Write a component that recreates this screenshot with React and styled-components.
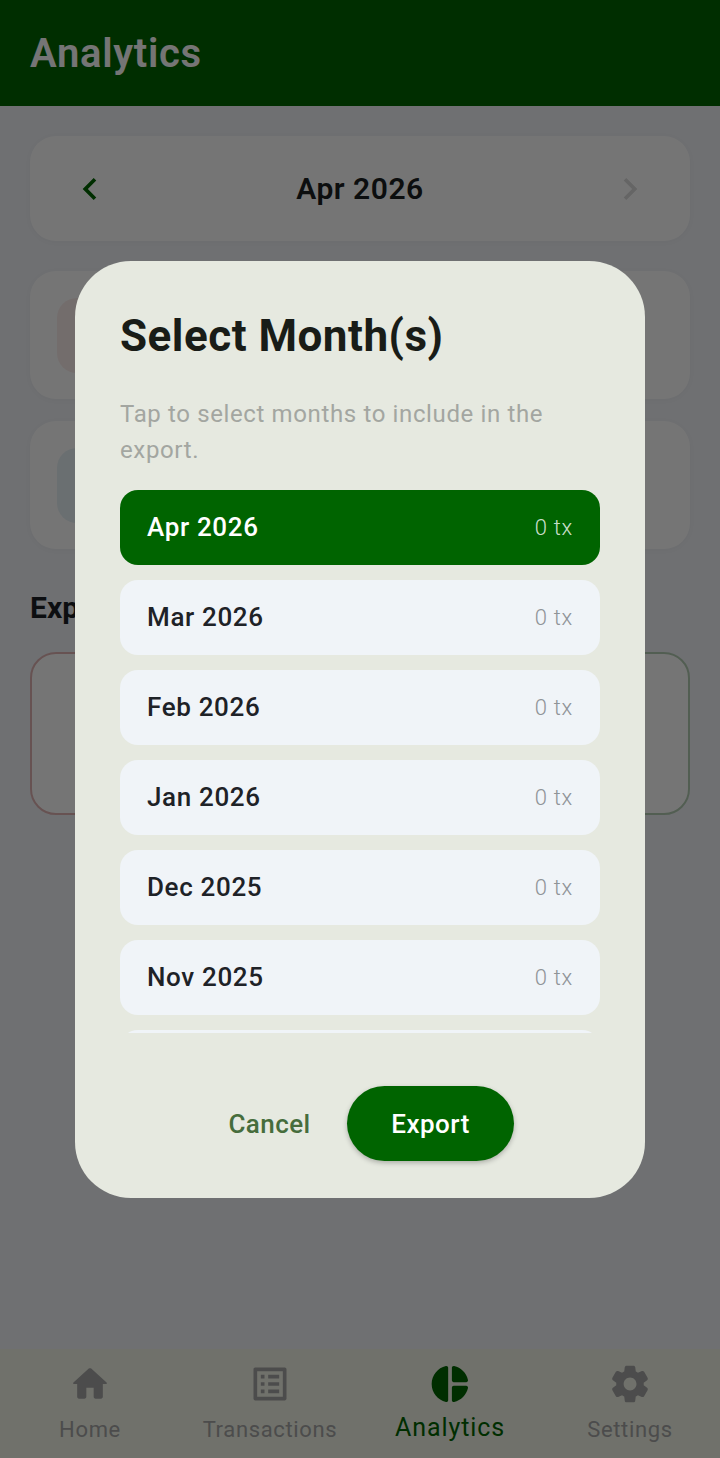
import React from 'react';
import styled, { createGlobalStyle } from 'styled-components';

const GlobalStyle = createGlobalStyle`
  html, body {
    margin: 0;
    padding: 0;
    height: 100%;
    overflow: hidden;
    font-family: Roboto, "Noto Sans", sans-serif;
  }
`;

const Page = styled.div`
  position: relative;
  display: flex;
  flex-direction: column;
  width: 720px;
  height: 1458px;
  overflow: hidden;
  background: #f1f3f8;
`;

const Header = styled.header`
  display: flex;
  align-items: center;
  height: 106px;
  padding: 0 30px;
  box-sizing: border-box;
  background: #006400;
`;

const HeaderTitle = styled.h1`
  margin: 0;
  font-size: 40px;
  font-weight: 600;
  letter-spacing: 0.7px;
  color: #fff;
`;

const Content = styled.main`
  flex: 1;
  display: flex;
  flex-direction: column;
  padding: 30px 30px 0;
`;

const Card = styled.section`
  background: #fff;
  border-radius: 26px;
  box-shadow: 0 1px 6px rgba(0, 0, 0, 0.03);
`;

const MonthCard = styled(Card)`
  display: flex;
  align-items: center;
  justify-content: space-between;
  height: 105px;
  padding: 0 38px;
  margin-bottom: 30px;
`;

const MonthLabel = styled.div`
  font-size: 30px;
  font-weight: 600;
  letter-spacing: 0.5px;
  color: #1c1f22;
`;

const StatCard = styled(Card)`
  display: flex;
  align-items: center;
  height: 128px;
  padding: 0 27px;
  box-sizing: border-box;
  margin-bottom: 22px;
`;

const StatBadge = styled.div`
  width: 75px;
  height: 75px;
  border-radius: 20px;
  background: ${(p) => p.$tint};
`;

const SectionTitle = styled.h2`
  margin: 20px 0 0;
  height: 40px;
  line-height: 34px;
  font-size: 30px;
  font-weight: 700;
  color: #1c1f26;
`;

const ExportRow = styled.div`
  display: grid;
  grid-template-columns: 1fr 1fr;
  gap: 20px;
  margin-top: 21px;
`;

const ExportCard = styled.div`
  height: 163px;
  box-sizing: border-box;
  border-radius: 26px;
  border: 2px solid ${(p) => p.$edge};
  background: #fff;
`;

const BottomNav = styled.nav`
  display: grid;
  grid-template-columns: repeat(4, 1fr);
  height: 109px;
  background: #f3f6e9;
`;

const NavItem = styled.div`
  display: flex;
  flex-direction: column;
  align-items: center;
  padding-top: 13px;
  color: ${(p) => (p.$active ? '#006400' : '#a6a6a6')};
`;

const NavIcon = styled.svg`
  display: block;
  width: 44px;
  height: 44px;
  fill: currentColor;
`;

const NavLabel = styled.span`
  font-size: ${(p) => (p.$active ? '25px' : '22px')};
  line-height: 30px;
  letter-spacing: ${(p) => (p.$active ? '0.9px' : '0.65px')};
  margin-top: ${(p) => (p.$active ? '7px' : '9px')};
`;

const Scrim = styled.div`
  position: absolute;
  inset: 0;
  display: flex;
  justify-content: center;
  align-items: flex-start;
  padding-top: 261px;
  box-sizing: border-box;
  background: rgba(0, 0, 0, 0.54);
`;

const Dialog = styled.div`
  display: flex;
  flex-direction: column;
  width: 570px;
  height: 937px;
  box-sizing: border-box;
  padding: 49px 45px 37px;
  border-radius: 56px;
  background: #e6e9e0;
`;

const DialogTitle = styled.h2`
  margin: 0;
  font-size: 44px;
  line-height: 52px;
  font-weight: 700;
  letter-spacing: 0.5px;
  color: #191c17;
`;

const DialogText = styled.p`
  margin: 34px 0 22px;
  font-size: 24px;
  line-height: 36px;
  letter-spacing: 0.63px;
  color: #a3a6a1;
`;

const MonthList = styled.div`
  display: flex;
  flex-direction: column;
  gap: 15px;
  height: 543px;
  overflow: hidden;
`;

const MonthRow = styled.div`
  flex: none;
  display: flex;
  align-items: center;
  justify-content: space-between;
  height: 75px;
  padding: 0 27px 2px;
  box-sizing: border-box;
  border-radius: 18px;
  background: ${(p) => (p.$selected ? '#006400' : '#f0f4f8')};
`;

const RowMonth = styled.span`
  font-size: 26px;
  font-weight: 500;
  letter-spacing: 0.65px;
  color: ${(p) => (p.$selected ? '#fff' : '#1e2227')};
`;

const RowCount = styled.span`
  padding-top: 2px;
  font-size: 22px;
  font-weight: 300;
  letter-spacing: 0.7px;
  color: ${(p) => (p.$selected ? 'rgba(255,255,255,0.8)' : '#8f9397')};
`;

const Actions = styled.div`
  display: flex;
  justify-content: center;
  align-items: center;
  gap: 14px;
  margin-top: 53px;
`;

const CancelButton = styled.button`
  padding: 0 22px;
  border: 0;
  background: none;
  font-family: inherit;
  font-size: 26px;
  font-weight: 500;
  letter-spacing: 0.4px;
  color: #466d3c;
`;

const ExportButton = styled.button`
  width: 167px;
  height: 75px;
  padding: 0 0 0 1px;
  border: 0;
  border-radius: 38px;
  background: #006400;
  font-family: inherit;
  font-size: 26px;
  font-weight: 500;
  letter-spacing: 0.5px;
  color: #fff;
  box-shadow: 0 2px 5px rgba(0, 0, 0, 0.25);
`;

const Chevron = ({ dir, color }) => (
  <svg width="44" height="44" viewBox="0 0 24 24" fill={color}>
    {dir === 'left' ? (
      <path d="M15.41 7.41 14 6l-6 6 6 6 1.41-1.41L10.83 12z" />
    ) : (
      <path d="M8.59 16.59 10 18l6-6-6-6-1.41 1.41L13.17 12z" />
    )}
  </svg>
);

const navItems = [
  {
    label: 'Home',
    d: 'M10 19v-5h4v5c0 .55.45 1 1 1h3c.55 0 1-.45 1-1v-7h1.7c.46 0 .68-.57.33-.87L12.67 3.6c-.38-.34-.96-.34-1.34 0l-8.36 7.53c-.34.3-.13.87.33.87H5v7c0 .55.45 1 1 1h3c.55 0 1-.45 1-1z',
  },
  {
    label: 'Transactions',
    d: 'M19 5v14H5V5h14m1.1-2H3.9c-.5 0-.9.4-.9.9v16.2c0 .4.4.9.9.9h16.2c.4 0 .9-.5.9-.9V3.9c0-.5-.5-.9-.9-.9zM11 7h6v2h-6V7zm0 4h6v2h-6v-2zm0 4h6v2h-6zM7 7h2v2H7zm0 4h2v2H7zm0 4h2v2H7z',
  },
  {
    label: 'Analytics',
    active: true,
    d: 'M11 3.18v17.64c0 .64-.59 1.12-1.21.98C5.32 20.8 2 16.79 2 12s3.32-8.8 7.79-9.8c.62-.14 1.21.34 1.21.98zm2.03 0v6.81c0 .55.45 1 1 1h6.79c.64 0 1.12-.59.98-1.22-.85-3.76-3.8-6.72-7.55-7.57-.63-.14-1.22.34-1.22.98zm0 10.83v6.81c0 .64.59 1.12 1.22.98 3.76-.85 6.71-3.82 7.56-7.58.14-.62-.35-1.22-.98-1.22h-6.79c-.56.01-1.01.46-1.01 1.01z',
  },
  {
    label: 'Settings',
    d: 'M19.5 12c0-.23-.01-.45-.03-.68l1.86-1.41c.4-.3.51-.86.26-1.3l-1.87-3.23c-.25-.44-.79-.62-1.25-.42l-2.15.91c-.37-.26-.76-.49-1.17-.68l-.29-2.31c-.06-.5-.49-.88-.99-.88h-3.73c-.51 0-.94.38-1 .88l-.29 2.31c-.41.19-.8.42-1.17.68l-2.15-.91c-.46-.2-1-.02-1.25.42L2.41 8.62c-.25.44-.14.99.26 1.3l1.86 1.41c-.02.22-.03.44-.03.67s.01.45.03.68l-1.86 1.41c-.4.3-.51.86-.26 1.3l1.87 3.23c.25.44.79.62 1.25.42l2.15-.91c.37.26.76.49 1.17.68l.29 2.31c.06.5.49.88.99.88h3.73c.5 0 .93-.38.99-.88l.29-2.31c.41-.19.8-.42 1.17-.68l2.15.91c.46.2 1 .02 1.25-.42l1.87-3.23c.25-.44.14-.99-.26-1.3l-1.86-1.41c.03-.23.04-.45.04-.68zm-7.46 3.5c-1.93 0-3.5-1.57-3.5-3.5s1.57-3.5 3.5-3.5 3.5 1.57 3.5 3.5-1.57 3.5-3.5 3.5z',
  },
];

const months = ['Apr 2026', 'Mar 2026', 'Feb 2026', 'Jan 2026', 'Dec 2025', 'Nov 2025'];

function App() {
  return (
    <Page>
      <GlobalStyle />
      <Header>
        <HeaderTitle>Analytics</HeaderTitle>
      </Header>
      <Content>
        <MonthCard>
          <Chevron dir="left" color="#006400" />
          <MonthLabel>Apr 2026</MonthLabel>
          <Chevron dir="right" color="#dcdcdc" />
        </MonthCard>
        <StatCard>
          <StatBadge $tint="#fbeeec" />
        </StatCard>
        <StatCard>
          <StatBadge $tint="#e8f2f6" />
        </StatCard>
        <SectionTitle>Export</SectionTitle>
        <ExportRow>
          <ExportCard $edge="#e0b4b4" />
          <ExportCard $edge="#b4cdb4" />
        </ExportRow>
      </Content>
      <BottomNav>
        {navItems.map((item) => (
          <NavItem key={item.label} $active={item.active}>
            <NavIcon viewBox="0 0 24 24">
              <path d={item.d} />
            </NavIcon>
            <NavLabel $active={item.active}>{item.label}</NavLabel>
          </NavItem>
        ))}
      </BottomNav>
      <Scrim>
        <Dialog>
          <DialogTitle>Select Month(s)</DialogTitle>
          <DialogText>Tap to select months to include in the export.</DialogText>
          <MonthList>
            {months.map((m, i) => (
              <MonthRow key={m} $selected={i === 0}>
                <RowMonth $selected={i === 0}>{m}</RowMonth>
                <RowCount $selected={i === 0}>0 tx</RowCount>
              </MonthRow>
            ))}
            <MonthRow />
          </MonthList>
          <Actions>
            <CancelButton>Cancel</CancelButton>
            <ExportButton>Export</ExportButton>
          </Actions>
        </Dialog>
      </Scrim>
    </Page>
  );
}

export default App;
